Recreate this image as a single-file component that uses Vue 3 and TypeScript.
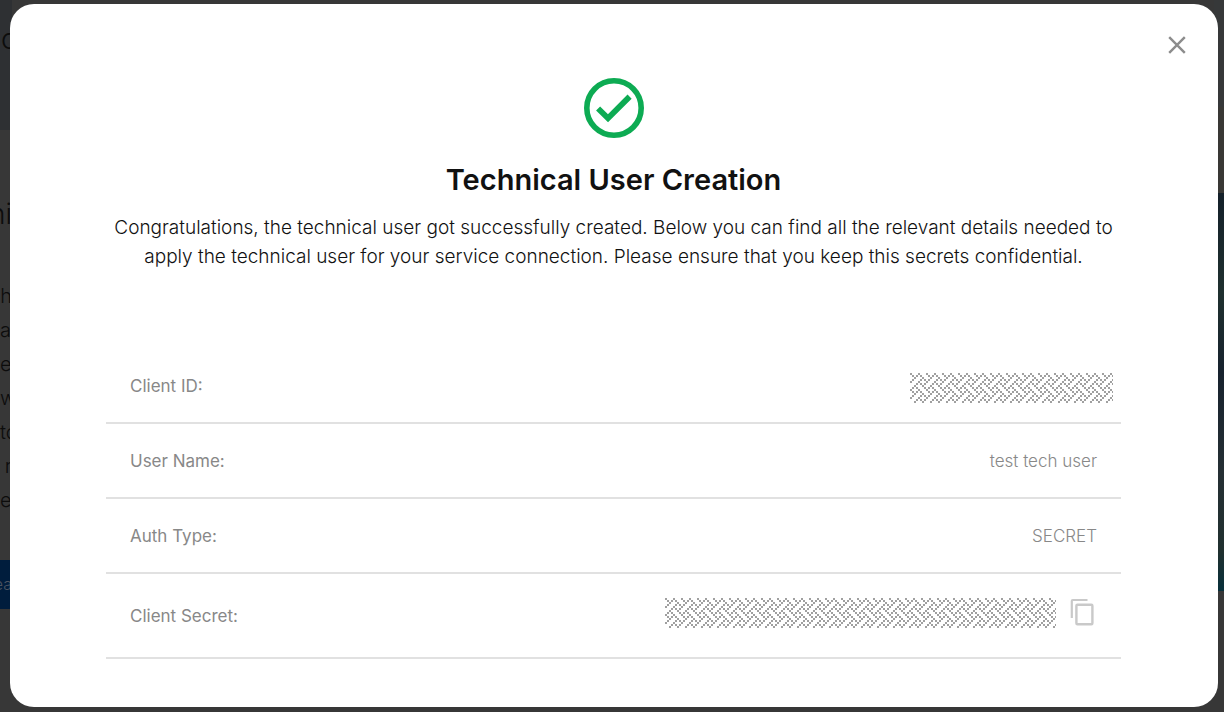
<script setup lang="ts">
interface Detail {
  id: string
  label: string
  value?: string
  masked?: boolean
  copyable?: boolean
}

interface Line {
  text: string
  end?: boolean
}

const details: Detail[] = [
  { id: 'client-id', label: 'Client ID:', masked: true },
  { id: 'user-name', label: 'User Name:', value: 'test tech user' },
  { id: 'auth-type', label: 'Auth Type:', value: 'SECRET' },
  { id: 'client-secret', label: 'Client Secret:', masked: true, copyable: true },
]

const lines: Line[] = [
  { text: 'ch', end: true },
  { text: 'a' },
  { text: 'e' },
  { text: 'w' },
  { text: 'to' },
  { text: 'r', end: true },
  { text: 'er' },
]

// One 8x8 tile of the woven mask, a string per row
const weave: string[] = [
  '10001000',
  '01010100',
  '00100010',
  '01000101',
  '10001000',
  '00010101',
  '00100010',
  '01010001',
]

const weavePath: string = weave
  .flatMap((row, y) => [...row].map((c, x) => (c === '1' ? `M${x * 2} ${y * 2}h2v2h-2z` : '')))
  .join('')
</script>

<template>
  <div class="screen">
    <div class="backdrop" aria-hidden="true">
      <div class="behind-left">
        <div class="hero"><span>c</span></div>
        <div class="heading"><span>ni</span></div>
        <div class="copy">
          <div v-for="line in lines" :key="line.text" class="line" :class="{ end: line.end }">
            <span>{{ line.text }}</span>
          </div>
        </div>
        <div class="action"><span>ea</span></div>
      </div>
      <div class="behind-right">
        <div class="top"></div>
        <div class="image"></div>
      </div>
    </div>

    <main class="dialog" role="dialog" aria-labelledby="dialog-title">
      <button class="close" type="button" aria-label="Close">
        <svg viewBox="0 0 18 18" width="18" height="18">
          <path d="M1.2 1.2 16.8 16.8M16.8 1.2 1.2 16.8" fill="none" stroke="#8c8c8c" stroke-width="2.4" />
        </svg>
      </button>

      <svg class="success" viewBox="0 0 60 60" width="60" height="60" aria-hidden="true">
        <circle cx="30" cy="30" r="27.2" fill="none" stroke="#0dab53" stroke-width="5.6" />
        <path d="M14.1 30.5 24 40.2 45.6 18.6" fill="none" stroke="#0dab53" stroke-width="5.8" />
      </svg>

      <h1 id="dialog-title">Technical User Creation</h1>
      <p class="intro">
        Congratulations, the technical user got successfully created. Below you can find all the relevant details needed to
        apply the technical user for your service connection. Please ensure that you keep this secrets confidential.
      </p>

      <dl class="details">
        <div v-for="item in details" :key="item.id" class="row" :class="item.id">
          <dt>{{ item.label }}</dt>
          <dd :class="{ masked: item.masked }">
            <svg v-if="item.masked" class="mask" aria-label="Hidden value">
              <defs>
                <pattern :id="'weave-' + item.id" width="16" height="16" patternUnits="userSpaceOnUse">
                  <path :d="weavePath" fill="#a0a0a0" shape-rendering="crispEdges" />
                </pattern>
              </defs>
              <rect width="100%" height="100%" :fill="`url(#weave-${item.id})`" />
            </svg>
            <template v-else>{{ item.value }}</template>
            <button v-if="item.copyable" class="copy-button" type="button" aria-label="Copy client secret">
              <svg viewBox="0 0 24 28" width="24" height="28">
                <path d="M1.8 20V3q0-1 1-1H17.5" fill="none" stroke="#c9c9c9" stroke-width="2.2" />
                <rect x="6.4" y="6.8" width="16" height="19.4" rx="1" fill="none" stroke="#c9c9c9" stroke-width="2.4" />
              </svg>
            </button>
          </dd>
        </div>
      </dl>
    </main>
  </div>
</template>

<style>
body {
  margin: 0;
  background: #373737;
}
</style>

<style scoped>
.screen {
  position: relative;
  box-sizing: border-box;
  min-height: 100vh;
  padding: 4px 6px 5px 10px;
  overflow: hidden;
  font-family: Inter, "Liberation Sans", sans-serif;
}

.backdrop {
  position: absolute;
  inset: 0;
  display: flex;
  justify-content: space-between;
  background: #373737;
  color: #0c0c0c;
  font-weight: 300;
}

.behind-left {
  width: 12px;
  overflow: hidden;
}

.behind-left span {
  flex: none;
}

.hero {
  display: flex;
  box-sizing: border-box;
  height: 130px;
  padding: 22px 0 0 1px;
  background: #2e3033;
  font-size: 28px;
  line-height: 34px;
}

.heading {
  display: flex;
  justify-content: flex-end;
  padding-top: 66px;
  font-size: 28px;
  line-height: 36px;
}

.copy {
  padding-top: 47px;
}

.line {
  display: flex;
  font-size: 20px;
  line-height: 34px;
}

.line.end {
  justify-content: flex-end;
}

.action {
  display: flex;
  justify-content: flex-end;
  margin-top: 43px;
  background: #001d3d;
  color: #4c5562;
  font-size: 16px;
  line-height: 49px;
}

.behind-right {
  width: 10px;
}

.behind-right .top {
  height: 193px;
  background: linear-gradient(#363839 0 107px, #393835 107px);
}

.behind-right .image {
  height: 398px;
  background: linear-gradient(#14202a, #1f302f 25%, #17222e 45%, #252f34 70%, #20302f 90%, #07303b);
}

.dialog {
  position: relative;
  display: flex;
  flex-direction: column;
  align-items: center;
  box-sizing: border-box;
  padding: 74px 97px 48px 96px;
  border-radius: 24px;
  background: #fff;
  color: #111;
}

.close {
  position: absolute;
  top: 32px;
  right: 32px;
  display: flex;
  padding: 0;
  border: 0;
  background: none;
  cursor: pointer;
}

.success {
  display: block;
}

h1 {
  margin: 22px 0 0;
  font-size: 29px;
  font-weight: 600;
  line-height: 40px;
}

.intro {
  margin: 13px 0 0;
  font-size: 19px;
  font-weight: 300;
  line-height: 29px;
  text-align: center;
}

.details {
  align-self: stretch;
  margin: 78px 0 0;
}

.row {
  display: flex;
  align-items: center;
  justify-content: space-between;
  box-sizing: border-box;
  height: 75px;
  padding: 0 24px;
  border-bottom: 2px solid #e1e1e1;
  color: #888;
  font-size: 17px;
}

.row.client-id {
  padding-right: 8px;
}

.row.client-secret {
  height: 85px;
  padding-right: 27px;
}

dd {
  margin: 0;
  font-weight: 300;
}

dd.masked {
  display: flex;
  align-self: flex-start;
  align-items: flex-start;
  padding-top: 24px;
}

.mask {
  display: block;
  width: 203px;
  height: 30px;
}

.client-secret .mask {
  width: 391px;
}

.copy-button {
  display: flex;
  margin-left: 14px;
  padding: 0;
  border: 0;
  background: none;
  cursor: pointer;
}
</style>
